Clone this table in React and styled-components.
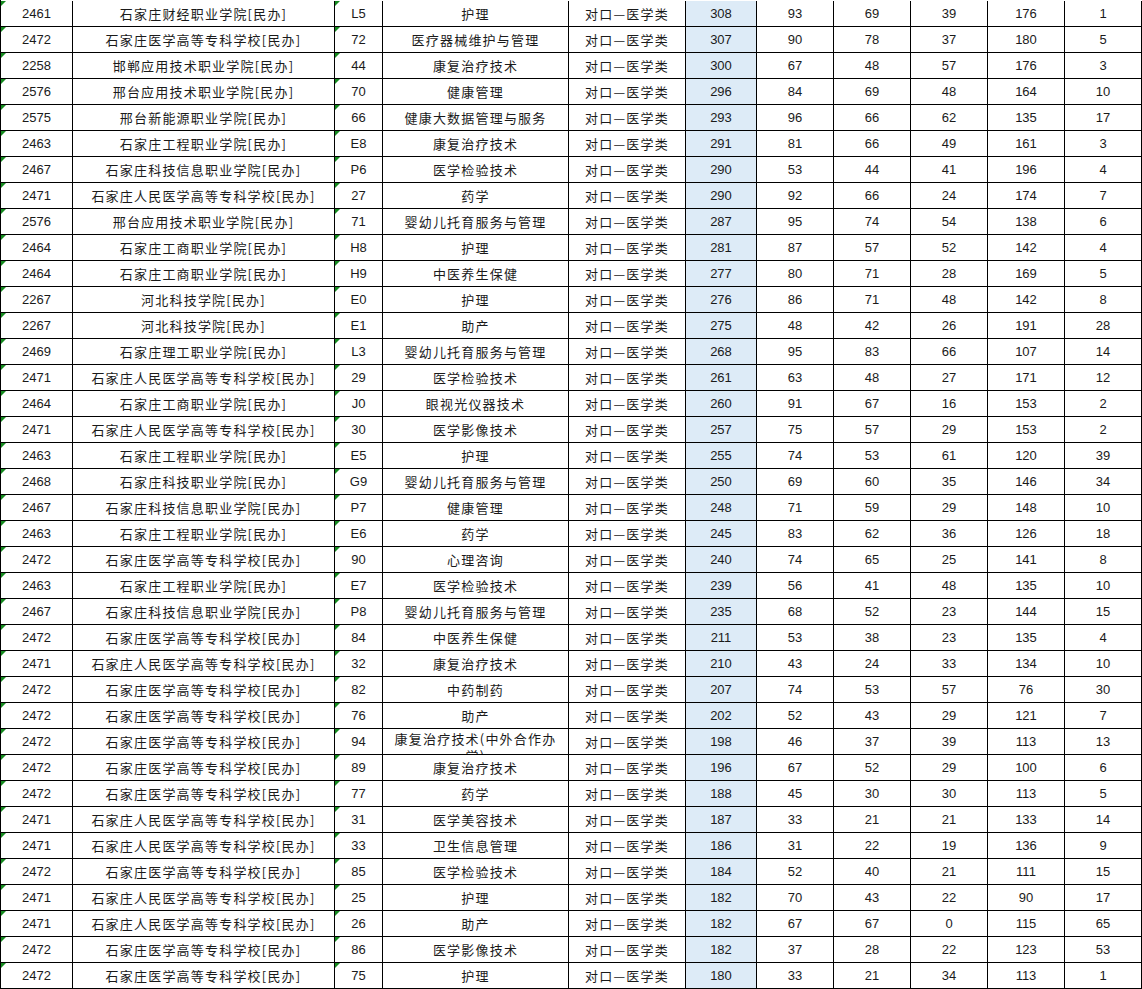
import React from "react";
import styled, { createGlobalStyle } from "styled-components";

const GlobalStyle = createGlobalStyle`
  html, body {
    margin: 0;
    padding: 0;
    background: #ffffff;
  }
  body {
    font-family: "Liberation Sans", "Noto Sans CJK SC", sans-serif;
    color: #1a1a1a;
  }
`;

const COLUMNS = "72px 262px 48px 186px 117px 71px 77px 77px 77px 77px 77px";

const Sheet = styled.div`
  width: 1142px;
  padding-top: 1px;
  border-left: 1px solid #000;
  box-sizing: border-box;
  overflow: hidden;
`;

const Row = styled.div`
  display: grid;
  grid-template-columns: ${COLUMNS};
  height: 26px;
`;

const Cell = styled.div`
  position: relative;
  box-sizing: border-box;
  height: 26px;
  border-right: 1px solid #000;
  border-bottom: 1px solid #000;
  display: flex;
  justify-content: center;
  align-items: ${(p) => (p.$wrap ? "flex-start" : "center")};
  padding-top: ${(p) => (p.$wrap ? "1px" : "1px")};
  overflow: hidden;
  text-align: center;
  white-space: ${(p) => (p.$wrap ? "pre-line" : "nowrap")};
  font-size: 13px;
  line-height: ${(p) => (p.$wrap ? "17px" : "16px")};
  letter-spacing: ${(p) => (p.$cjk ? "1.2px" : "0")};
  font-family: ${(p) =>
    p.$cjk
      ? '"Noto Sans CJK SC", "Liberation Sans", sans-serif'
      : '"Liberation Sans", "Noto Sans CJK SC", sans-serif'};
  background: ${(p) => (p.$hl ? "#ddebf7" : "transparent")};

  &::before {
    content: "";
    display: ${(p) => (p.$flag ? "block" : "none")};
    position: absolute;
    top: 0;
    left: 0;
    width: 0;
    height: 0;
    border-top: 5px solid #158a1f;
    border-right: 5px solid transparent;
  }
`;

const rows = [
  ["2461", "石家庄财经职业学院[民办]", "L5", "护理", 308, 93, 69, 39, 176, 1],
  ["2472", "石家庄医学高等专科学校[民办]", "72", "医疗器械维护与管理", 307, 90, 78, 37, 180, 5],
  ["2258", "邯郸应用技术职业学院[民办]", "44", "康复治疗技术", 300, 67, 48, 57, 176, 3],
  ["2576", "邢台应用技术职业学院[民办]", "70", "健康管理", 296, 84, 69, 48, 164, 10],
  ["2575", "邢台新能源职业学院[民办]", "66", "健康大数据管理与服务", 293, 96, 66, 62, 135, 17],
  ["2463", "石家庄工程职业学院[民办]", "E8", "康复治疗技术", 291, 81, 66, 49, 161, 3],
  ["2467", "石家庄科技信息职业学院[民办]", "P6", "医学检验技术", 290, 53, 44, 41, 196, 4],
  ["2471", "石家庄人民医学高等专科学校[民办]", "27", "药学", 290, 92, 66, 24, 174, 7],
  ["2576", "邢台应用技术职业学院[民办]", "71", "婴幼儿托育服务与管理", 287, 95, 74, 54, 138, 6],
  ["2464", "石家庄工商职业学院[民办]", "H8", "护理", 281, 87, 57, 52, 142, 4],
  ["2464", "石家庄工商职业学院[民办]", "H9", "中医养生保健", 277, 80, 71, 28, 169, 5],
  ["2267", "河北科技学院[民办]", "E0", "护理", 276, 86, 71, 48, 142, 8],
  ["2267", "河北科技学院[民办]", "E1", "助产", 275, 48, 42, 26, 191, 28],
  ["2469", "石家庄理工职业学院[民办]", "L3", "婴幼儿托育服务与管理", 268, 95, 83, 66, 107, 14],
  ["2471", "石家庄人民医学高等专科学校[民办]", "29", "医学检验技术", 261, 63, 48, 27, 171, 12],
  ["2464", "石家庄工商职业学院[民办]", "J0", "眼视光仪器技术", 260, 91, 67, 16, 153, 2],
  ["2471", "石家庄人民医学高等专科学校[民办]", "30", "医学影像技术", 257, 75, 57, 29, 153, 2],
  ["2463", "石家庄工程职业学院[民办]", "E5", "护理", 255, 74, 53, 61, 120, 39],
  ["2468", "石家庄科技职业学院[民办]", "G9", "婴幼儿托育服务与管理", 250, 69, 60, 35, 146, 34],
  ["2467", "石家庄科技信息职业学院[民办]", "P7", "健康管理", 248, 71, 59, 29, 148, 10],
  ["2463", "石家庄工程职业学院[民办]", "E6", "药学", 245, 83, 62, 36, 126, 18],
  ["2472", "石家庄医学高等专科学校[民办]", "90", "心理咨询", 240, 74, 65, 25, 141, 8],
  ["2463", "石家庄工程职业学院[民办]", "E7", "医学检验技术", 239, 56, 41, 48, 135, 10],
  ["2467", "石家庄科技信息职业学院[民办]", "P8", "婴幼儿托育服务与管理", 235, 68, 52, 23, 144, 15],
  ["2472", "石家庄医学高等专科学校[民办]", "84", "中医养生保健", 211, 53, 38, 23, 135, 4],
  ["2471", "石家庄人民医学高等专科学校[民办]", "32", "康复治疗技术", 210, 43, 24, 33, 134, 10],
  ["2472", "石家庄医学高等专科学校[民办]", "82", "中药制药", 207, 74, 53, 57, 76, 30],
  ["2472", "石家庄医学高等专科学校[民办]", "76", "助产", 202, 52, 43, 29, 121, 7],
  ["2472", "石家庄医学高等专科学校[民办]", "94", "康复治疗技术(中外合作办\n学)", 198, 46, 37, 39, 113, 13],
  ["2472", "石家庄医学高等专科学校[民办]", "89", "康复治疗技术", 196, 67, 52, 29, 100, 6],
  ["2472", "石家庄医学高等专科学校[民办]", "77", "药学", 188, 45, 30, 30, 113, 5],
  ["2471", "石家庄人民医学高等专科学校[民办]", "31", "医学美容技术", 187, 33, 21, 21, 133, 14],
  ["2471", "石家庄人民医学高等专科学校[民办]", "33", "卫生信息管理", 186, 31, 22, 19, 136, 9],
  ["2472", "石家庄医学高等专科学校[民办]", "85", "医学检验技术", 184, 52, 40, 21, 111, 15],
  ["2471", "石家庄人民医学高等专科学校[民办]", "25", "护理", 182, 70, 43, 22, 90, 17],
  ["2471", "石家庄人民医学高等专科学校[民办]", "26", "助产", 182, 67, 67, 0, 115, 65],
  ["2472", "石家庄医学高等专科学校[民办]", "86", "医学影像技术", 182, 37, 28, 22, 123, 53],
  ["2472", "石家庄医学高等专科学校[民办]", "75", "护理", 180, 33, 21, 34, 113, 1],
];

export default function App() {
  return (
    <>
      <GlobalStyle />
      <Sheet>
        {rows.map(([id, school, code, major, score, a, b, c, d, e], i) => (
          <Row key={i}>
            <Cell $flag>{id}</Cell>
            <Cell $cjk>{school}</Cell>
            <Cell $flag>{code}</Cell>
            <Cell $cjk $wrap={major.includes("\n")}>{major}</Cell>
            <Cell $cjk>对口—医学类</Cell>
            <Cell $hl>{score}</Cell>
            <Cell>{a}</Cell>
            <Cell>{b}</Cell>
            <Cell>{c}</Cell>
            <Cell>{d}</Cell>
            <Cell>{e}</Cell>
          </Row>
        ))}
      </Sheet>
    </>
  );
}
